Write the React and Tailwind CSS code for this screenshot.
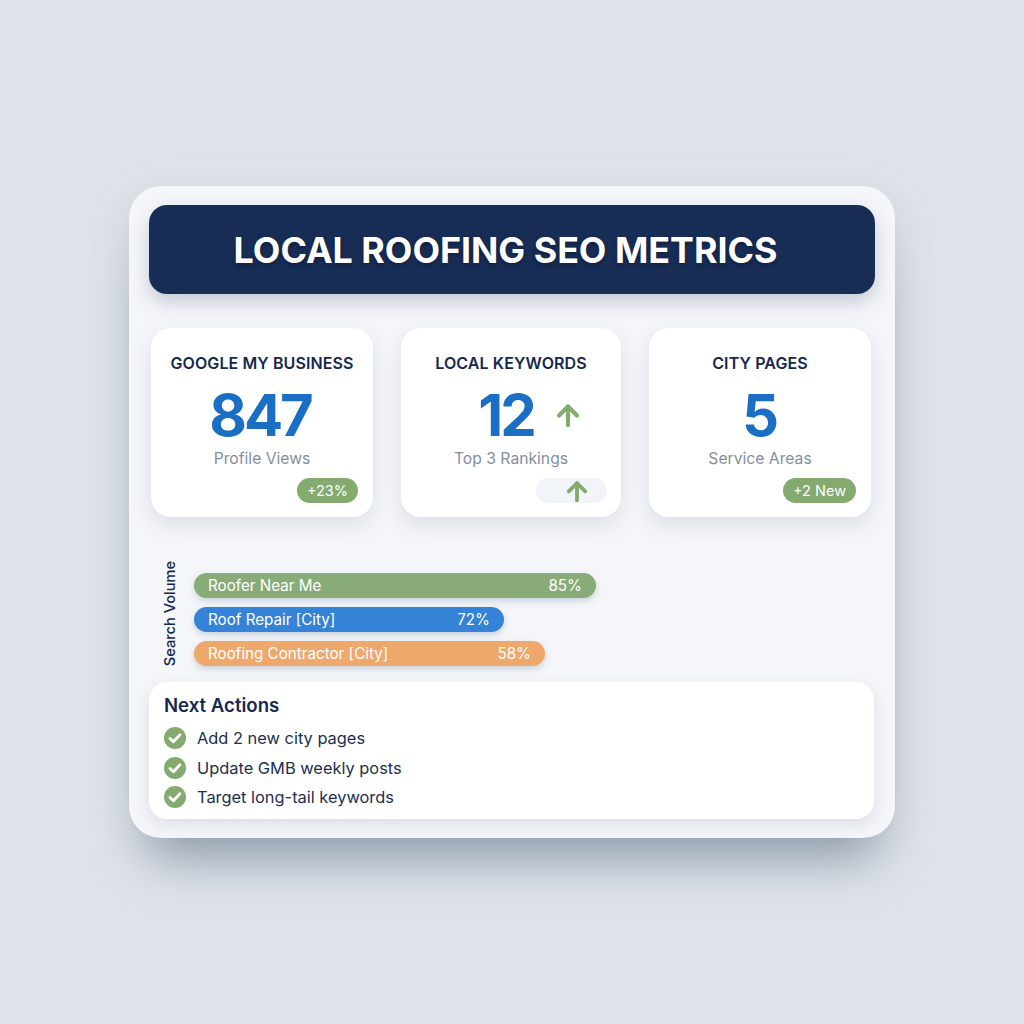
import React from "react";

const ArrowUp = ({ className }) => (
  <svg viewBox="0 0 24 24" fill="none" stroke="#84aa6f" strokeWidth="4.2" strokeLinecap="round" strokeLinejoin="round" className={className}>
    <path d="M12 22V3.5" />
    <path d="M3 12.5l9-9 9 9" />
  </svg>
);

const CheckDot = () => (
  <svg viewBox="0 0 22 22" className="w-[22px] h-[22px] shrink-0">
    <circle cx="11" cy="11" r="11" fill="#84aa6f" />
    <path d="M6 11.5l3.4 3.3L16 7.8" fill="none" stroke="#ffffff" strokeWidth="2.8" strokeLinecap="round" strokeLinejoin="round" />
  </svg>
);

const cardClass = "h-[189px] rounded-[20px] bg-white shadow-[0_8px_20px_rgba(120,135,160,0.2)] flex flex-col items-center pt-[25px]";
const titleClass = "text-[16px] leading-5 font-semibold text-[#152850] tracking-[0.1px]";
const numberClass = "text-[58px] leading-[58px] font-bold text-[#1a6fc4] tracking-[-3px]";
const labelClass = "mt-[3px] text-[15.7px] leading-6 text-[#858e9e]";
const badgeClass = "h-[25px] rounded-full bg-[#84aa6f] flex items-center justify-center text-[14.5px] text-white";

const bars = [
  { label: "Roofer Near Me", pct: "85%", width: "w-[402px]", color: "bg-[#88ab77]" },
  { label: "Roof Repair [City]", pct: "72%", width: "w-[310px]", color: "bg-[#3583d6]" },
  { label: "Roofing Contractor [City]", pct: "58%", width: "w-[351px]", color: "bg-[#eea86c]" },
];

const actions = ["Add 2 new city pages", "Update GMB weekly posts", "Target long-tail keywords"];

export default function App() {
  return (
    <div className="w-full h-[1024px] flex items-center justify-center bg-[#dfe3e9] font-['Inter',sans-serif]">
      <div className="w-[766px] h-[652px] rounded-[32px] bg-[#f4f6f9] shadow-[0_40px_50px_-20px_rgba(90,105,130,0.55),0_10px_40px_rgba(120,135,155,0.15)] px-[20px] pt-[19px]">
        <div className="w-[726px] h-[89px] pr-[13px] pt-[2px] rounded-[18px] bg-[#182d56] shadow-[0_8px_18px_rgba(90,105,135,0.3)] flex items-center justify-center">
          <h1 className="text-[35.8px] font-bold text-white [text-shadow:0_2px_4px_rgba(0,0,0,0.35)]">LOCAL ROOFING SEO METRICS</h1>
        </div>

        <div className="mt-[34px] mx-[2px] grid grid-cols-[222px_220px_222px] gap-x-[28px] w-[722px]">
          <div className={cardClass}>
            <div className={titleClass}>GOOGLE MY BUSINESS</div>
            <div className="mt-[13px] h-[58px] flex mr-[4px]">
              <span className={numberClass}>847</span>
            </div>
            <div className={labelClass}>Profile Views</div>
            <div className="mt-[7px] w-full flex justify-end pr-[15px]">
              <span className={`${badgeClass} w-[61px]`}>+23%</span>
            </div>
          </div>

          <div className={cardClass}>
            <div className={titleClass}>LOCAL KEYWORDS</div>
            <div className="mt-[13px] h-[58px] flex items-center gap-[22px] ml-[36px]">
              <span className={numberClass}>12</span>
              <ArrowUp className="w-[24px] h-[24px]" />
            </div>
            <div className={labelClass}>Top 3 Rankings</div>
            <div className="mt-[7px] w-full flex justify-end pr-[14px]">
              <span className="h-[25px] w-[71px] rounded-full bg-[#f1f4f8] flex items-center justify-end pr-[19px]">
                <ArrowUp className="w-[22px] h-[22px]" />
              </span>
            </div>
          </div>

          <div className={cardClass}>
            <div className={titleClass}>CITY PAGES</div>
            <div className="mt-[13px] h-[58px] flex mr-[2px]">
              <span className={numberClass}>5</span>
            </div>
            <div className={labelClass}>Service Areas</div>
            <div className="mt-[7px] w-full flex justify-end pr-[15px]">
              <span className={`${badgeClass} w-[73px]`}>+2 New</span>
            </div>
          </div>
        </div>

        <div className="mt-[44px] ml-[14px] flex items-center gap-[17px] h-[106px]">
          <span className="[writing-mode:vertical-rl] rotate-180 text-[14.6px] leading-[14px] font-medium text-[#152850]">Search Volume</span>
          <div className="flex flex-col gap-[9px] mt-[10px]">
            {bars.map((bar) => (
              <div
                key={bar.label}
                className={`${bar.width} ${bar.color} h-[25px] rounded-full px-[14px] pt-[2px] flex items-center justify-between text-[15.2px] text-white shadow-[0_3px_6px_rgba(110,125,150,0.3)]`}
              >
                <span>{bar.label}</span>
                <span>{bar.pct}</span>
              </div>
            ))}
          </div>
        </div>

        <div className="mt-[15px] w-[725px] h-[137px] rounded-[18px] bg-white shadow-[0_6px_16px_rgba(120,135,160,0.2)] px-[15px] pt-[11px]">
          <h2 className="text-[18.6px] leading-6 font-semibold text-[#152850]">Next Actions</h2>
          <ul className="mt-[10px] flex flex-col gap-[7.5px]">
            {actions.map((item) => (
              <li key={item} className="flex items-center gap-[11px] h-[22px] text-[16.4px] text-[#1c2f52]">
                <CheckDot />
                <span className="pt-[1px]">{item}</span>
              </li>
            ))}
          </ul>
        </div>
      </div>
    </div>
  );
}
